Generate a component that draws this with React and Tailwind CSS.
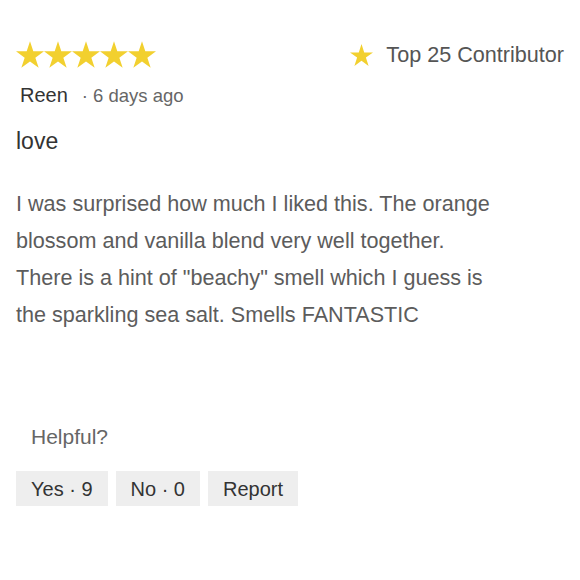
const STAR_POINTS = "50,0 61.8,36.3 100,36.3 69.1,58.8 80.9,95.1 50,72.6 19.1,95.1 30.9,58.8 0,36.3 38.2,36.3";

const Star = ({ className }) => (
  <svg viewBox="0 0 100 95.1" className={className}>
    <polygon points={STAR_POINTS} fill="#f2d02f" />
  </svg>
);

const VoteButton = ({ label }) => (
  <button className="h-[35px] px-[15px] bg-[#eeeeee] text-[20px] leading-[24px] text-[#333333]">
    {label}
  </button>
);

const App = () => {
  return (
    <div className="w-[580px] h-[580px] bg-white px-4 font-['Liberation_Sans',Arial,sans-serif]">

      <div className="flex items-center justify-between pt-[41px]">
        <div className="flex">
          {[0, 1, 2, 3, 4].map((i) => (
            <Star key={i} className="w-[28px] h-[27px]" />
          ))}
        </div>
        <div className="flex items-center gap-[13px]">
          <Star className="w-[23px] h-[22px]" />
          <span className="text-[21.6px] leading-[24px] text-[#555555]">Top 25 Contributor</span>
        </div>
      </div>

      <div className="mt-[15px] pl-1 leading-[24px]">
        <span className="text-[20px] text-[#333333]">Reen</span>
        <span className="ml-[14px] text-[18.5px] text-[#666666]">· 6 days ago</span>
      </div>

      <h3 className="mt-[18px] text-[23px] leading-[28px] text-[#333333]">love</h3>

      <p className="mt-[30px] w-[482px] text-[21.6px] leading-[37px] text-[#5c5c5c]">
        I was surprised how much I liked this. The orange blossom and vanilla blend very well together. There is a hint of "beachy" smell which I guess is the sparkling sea salt. Smells FANTASTIC
      </p>

      <div className="mt-[92px] pl-[15px] text-[21px] leading-[24px] text-[#666666]">Helpful?</div>

      <div className="mt-[22px] flex gap-2">
        <VoteButton label="Yes · 9" />
        <VoteButton label="No · 0" />
        <VoteButton label="Report" />
      </div>
    </div>
  )
}

export default App
